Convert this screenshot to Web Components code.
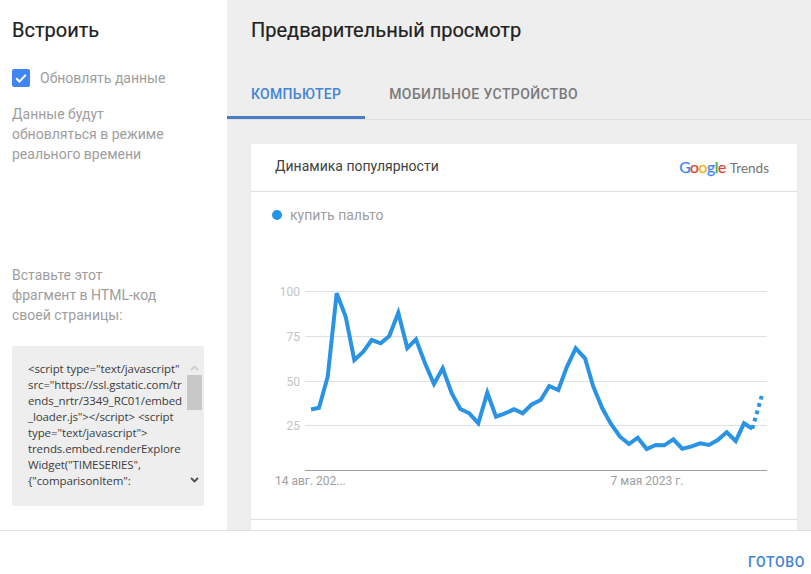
<!DOCTYPE html>
<html lang="ru">
<head>
<meta charset="utf-8">
<title>Встроить</title>
<style>
    html, body { margin: 0; height: 100%; background: #fff; overflow: hidden; }
    body { font-family: Roboto, "Liberation Sans", sans-serif; }
</style>
</head>
<body>
<embed-dialog>
    <embed-sidebar slot="side"></embed-sidebar>
    <preview-pane slot="main">
        <trend-card></trend-card>
    </preview-pane>
    <dialog-footer slot="foot"></dialog-footer>
</embed-dialog>

<script>
class EmbedDialog extends HTMLElement {
    constructor() {
        super();
        this.attachShadow({ mode: 'open' });
    }

    connectedCallback() {
        this.shadowRoot.innerHTML = `
            <style>
                :host {
                    display: grid;
                    grid-template-columns: 227px 1fr;
                    grid-template-rows: 530px 44px;
                    width: 811px;
                    height: 574px;
                    overflow: hidden;
                }
                .foot { grid-column: 1 / 3; }
            </style>
            <slot name="side"></slot>
            <slot name="main"></slot>
            <div class="foot"><slot name="foot"></slot></div>
        `;
    }
}

class EmbedSidebar extends HTMLElement {
    constructor() {
        super();
        this.attachShadow({ mode: 'open' });
    }

    connectedCallback() {
        this.shadowRoot.innerHTML = `
            <style>
                :host {
                    display: flex;
                    flex-direction: column;
                    box-sizing: border-box;
                    height: 530px;
                    padding: 0 12px;
                    background: #fff;
                    color: #9e9e9e;
                    font-size: 14px;
                    line-height: 20px;
                }
                h2 {
                    margin: 18px 0 0;
                    font-size: 20px;
                    line-height: 24px;
                    font-weight: 400;
                    color: #212121;
                    -webkit-text-stroke: 0.2px #212121;
                }
                .check {
                    display: flex;
                    align-items: center;
                    gap: 10px;
                    margin-top: 26px;
                    height: 20px;
                }
                .box {
                    width: 18px;
                    height: 18px;
                    border-radius: 2px;
                    background: #4285f4;
                    display: block;
                }
                p { margin: 0; }
                .note { margin-top: 16px; }
                .hint { margin-top: 101px; }
                .code {
                    display: flex;
                    margin-top: 21px;
                    width: 192px;
                    height: 160px;
                    background: #eee;
                    border-radius: 2px;
                    overflow: hidden;
                    color: #3c3c3c;
                    font-family: "Open Sans", "Liberation Sans", sans-serif;
                    font-size: 11.5px;
                    line-height: 16px;
                    letter-spacing: -0.1px;
                }
                .code pre {
                    flex: 1;
                    margin: 0;
                    padding: 15px 2px 0 16px;
                    font: inherit;
                    white-space: normal;
                    overflow-wrap: anywhere;
                }
                .bar {
                    flex: none;
                    display: flex;
                    flex-direction: column;
                    align-items: center;
                    width: 15px;
                    margin: 19px 2px 0 0;
                }
                .bar svg { display: block; }
                .thumb {
                    width: 15px;
                    height: 35px;
                    margin: 4px 0 67px;
                    background: #c8c8c8;
                }
            </style>
            <h2>Встроить</h2>
            <label class="check">
                <svg class="box" viewBox="0 0 18 18"><path d="M4.2 9.3l3.2 3.2 6.4-6.6" fill="none" stroke="#fff" stroke-width="2"/></svg>
                <span>Обновлять данные</span>
            </label>
            <p class="note">Данные будут<br>обновляться в режиме<br>реального времени</p>
            <p class="hint">Вставьте этот<br>фрагмент в HTML-код<br>своей страницы:</p>
            <div class="code">
                <pre>&lt;script type="text/javascript" src="https://ssl.gstatic.com/trends_nrtr/3349_RC01/embed_loader.js"&gt;&lt;/script&gt; &lt;script type="text/javascript"&gt; trends.embed.renderExploreWidget("TIMESERIES", {"comparisonItem":</pre>
                <div class="bar">
                    <svg width="9" height="6" viewBox="0 0 9 6"><path d="M1 5l3.5-3.5L8 5" fill="none" stroke="#cfcfcf" stroke-width="1.8"/></svg>
                    <div class="thumb"></div>
                    <svg width="9" height="6" viewBox="0 0 9 6"><path d="M1 1l3.5 3.5L8 1" fill="none" stroke="#505050" stroke-width="1.8"/></svg>
                </div>
            </div>
        `;
    }
}

class PreviewPane extends HTMLElement {
    constructor() {
        super();
        this.attachShadow({ mode: 'open' });
    }

    connectedCallback() {
        this.shadowRoot.innerHTML = `
            <style>
                :host {
                    display: block;
                    height: 530px;
                    background: #eee;
                    overflow: hidden;
                }
                h2 {
                    margin: 0;
                    padding: 18px 0 0 24px;
                    font-size: 20px;
                    line-height: 24px;
                    font-weight: 400;
                    color: #212121;
                    -webkit-text-stroke: 0.2px #212121;
                }
                .tabs {
                    display: flex;
                    margin-top: 28px;
                    height: 49px;
                    border-bottom: 1px solid #e0e0e0;
                    font-size: 14px;
                    font-weight: 500;
                    line-height: 48px;
                }
                .tab { padding: 0 24px; color: #7a7a7a; white-space: nowrap; letter-spacing: 0.4px; }
                .tab.active {
                    height: 46px;
                    color: #4285d4;
                    letter-spacing: 0.3px;
                    border-bottom: 3px solid #4a7fc8;
                }
                .body { padding: 24px 14px 0 24px; }
            </style>
            <h2>Предварительный просмотр</h2>
            <div class="tabs">
                <div class="tab active">КОМПЬЮТЕР</div>
                <div class="tab">МОБИЛЬНОЕ УСТРОЙСТВО</div>
            </div>
            <div class="body"><slot></slot></div>
        `;
    }
}

class TrendCard extends HTMLElement {
    constructor() {
        super();
        this.attachShadow({ mode: 'open' });
    }

    connectedCallback() {
        this.shadowRoot.innerHTML = `
            <style>
                :host {
                    display: block;
                    height: 400px;
                    background: #fff;
                    box-shadow: 0 1px 2px rgba(0, 0, 0, .08);
                }
                header {
                    display: flex;
                    align-items: center;
                    justify-content: space-between;
                    box-sizing: border-box;
                    height: 48px;
                    padding: 0 28px 3px 24px;
                    border-bottom: 1px solid #e0e0e0;
                }
                h3 {
                    margin: 0;
                    font-size: 14px;
                    font-weight: 400;
                    color: #424242;
                }
                .logo {
                    display: flex;
                    align-items: baseline;
                    gap: 4px;
                    margin-top: 2px;
                    font-family: Lato, "Liberation Sans", sans-serif;
                    font-size: 13.5px;
                    color: #757575;
                    white-space: nowrap;
                }
                .word { font-size: 15.6px; letter-spacing: -0.4px; -webkit-text-stroke: 0.25px; }
                .g1 { color: #4285f4; } .g2 { color: #db4437; } .g3 { color: #f4b400; } .g4 { color: #34a853; }
                .legend {
                    display: flex;
                    align-items: center;
                    gap: 8px;
                    height: 20px;
                    padding: 13px 0 0 21px;
                    font-size: 14px;
                    color: #9e9e9e;
                }
                .dot { width: 10px; height: 10px; border-radius: 50%; background: #2196e8; }
                .rule { border-top: 1px solid #e0e0e0; }
            </style>
            <header>
                <h3>Динамика популярности</h3>
                <div class="logo"><span class="word"><span class="g1">G</span><span class="g2">o</span><span class="g3">o</span><span class="g1">g</span><span class="g4">l</span><span class="g2">e</span></span><span>Trends</span></div>
            </header>
            <div class="legend"><span class="dot"></span><span>купить пальто</span></div>
            <trend-chart></trend-chart>
            <div class="rule"></div>
        `;
    }
}

class TrendChart extends HTMLElement {
    constructor() {
        super();
        this.attachShadow({ mode: 'open' });
    }

    connectedCallback() {
        // coordinates are relative to the card's left edge and the svg's top
        const solid = [
            [60,175.5],[68,173.7],[76.7,142.7],[85.7,59.3],[94.7,82.7],[103.3,126],[112.3,117.7],[120.7,106],
            [129.7,109.3],[138.3,102],[147.3,78.7],[156.3,114],[165,105.3],[174,129.3],[183,150],[191.7,134.3],
            [200.7,159.3],[209.3,175],[218.3,179.3],[227.3,189.3],[236.3,158.7],[245,182.7],[254,179.3],[263,175.3],
            [271.7,179.3],[280.7,170.5],[289.7,166],[298.3,152],[307.3,156],[315.7,133.3],[324.7,114.3],[334,124.3],
            [342.3,152.7],[351.3,174.3],[360,190],[369,202.7],[378,210],[386.7,203.7],[395.7,215],[404.7,211],
            [413.3,211.3],[422.3,205.3],[431.3,214.7],[440,212.7],[449,209.3],[458,211],[466.7,206],[475.7,198.3],
            [484.7,207],[493,189.3],[501.3,194.7]
        ];
        const grid = [[100, 57.5], [75, 102.5], [50, 147.5], [25, 191.5]];
        const gridLines = grid.map(([label, y]) => `
            <line x1="54" x2="516" y1="${y}" y2="${y}" stroke="#e0e0e0"/>
            <text x="49" y="${y + 4.5}" text-anchor="end">${label}</text>`).join('');

        this.shadowRoot.innerHTML = `
            <style>
                :host { display: block; box-sizing: border-box; height: 294px; padding-top: 9px; }
                svg { display: block; }
                text {
                    font-family: Roboto, "Liberation Sans", sans-serif;
                    font-size: 12px;
                    fill: #c4c4c4;
                }
                .date { fill: #9e9e9e; }
            </style>
            <svg width="546" height="285" viewBox="0 0 546 285">
                ${gridLines}
                <line x1="54" x2="516" y1="236.5" y2="236.5" stroke="#9e9e9e"/>
                <polyline points="${solid.join(' ')}" fill="none" stroke="#2b93e3" stroke-width="4" stroke-linejoin="miter"/>
                <polyline points="501.3,194.7 510.7,162" fill="none" stroke="#2b93e3" stroke-width="4" stroke-dasharray="3.8 3.8"/>
                <text class="date" x="24" y="251">14 авг. 202...</text>
                <text class="date" x="396" y="251" text-anchor="middle">7 мая 2023 г.</text>
            </svg>
        `;
    }
}

class DialogFooter extends HTMLElement {
    constructor() {
        super();
        this.attachShadow({ mode: 'open' });
    }

    connectedCallback() {
        this.shadowRoot.innerHTML = `
            <style>
                :host {
                    display: flex;
                    justify-content: flex-end;
                    align-items: flex-end;
                    box-sizing: border-box;
                    height: 44px;
                    padding: 0 6px 2px 0;
                    background: #fff;
                    border-top: 1px solid #e0e0e0;
                }
                button {
                    border: 0;
                    padding: 0;
                    background: none;
                    font: 500 14px/20px Roboto, "Liberation Sans", sans-serif;
                    letter-spacing: 0.65px;
                    color: #4285d4;
                }
            </style>
            <button>ГОТОВО</button>
        `;
    }
}

customElements.define('embed-dialog', EmbedDialog);
customElements.define('embed-sidebar', EmbedSidebar);
customElements.define('preview-pane', PreviewPane);
customElements.define('trend-card', TrendCard);
customElements.define('trend-chart', TrendChart);
customElements.define('dialog-footer', DialogFooter);
</script>
</body>
</html>
